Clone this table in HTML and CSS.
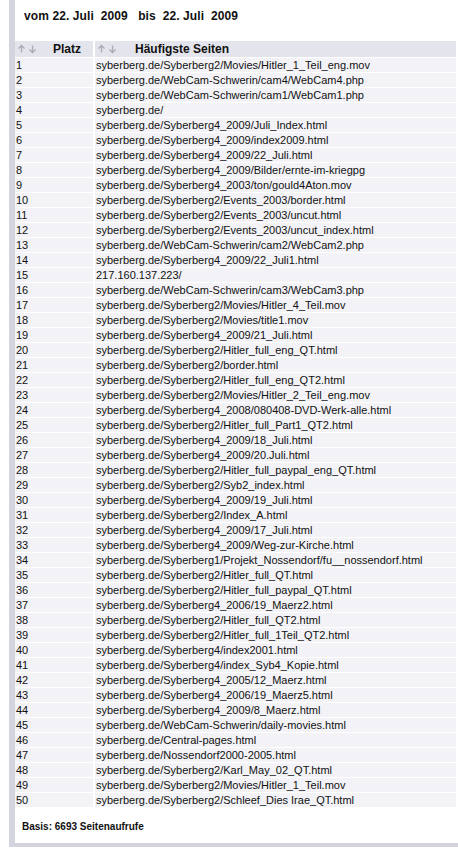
FILE: index.html
```html
<!DOCTYPE html>
<html lang="de">
<head>
<meta charset="utf-8">
<title>Häufigste Seiten</title>
<link rel="stylesheet" href="styles.css">
</head>
<body>
<div class="page">
  <h1 class="range">vom 22. Juli&nbsp; 2009 &nbsp; bis&nbsp; 22. Juli&nbsp; 2009</h1>
  <table class="stats">
    <thead>
      <tr>
        <th class="c1"><span class="sort"><svg viewBox="0 0 9 10"><path d="M4.5 1.5v7M1.5 4.5l3-3 3 3"/></svg><svg viewBox="0 0 9 10"><path d="M4.5 1.5v7M1.5 5.5l3 3 3-3"/></svg></span><span class="lbl l1">Platz</span></th>
        <th class="c2"><span class="sort"><svg viewBox="0 0 9 10"><path d="M4.5 1.5v7M1.5 4.5l3-3 3 3"/></svg><svg viewBox="0 0 9 10"><path d="M4.5 1.5v7M1.5 5.5l3 3 3-3"/></svg></span><span class="lbl l2">Häufigste Seiten</span></th>
      </tr>
    </thead>
    <tbody>
<tr><td>1</td><td>syberberg.de/Syberberg2/Movies/Hitler_1_Teil_eng.mov</td></tr>
<tr><td>2</td><td>syberberg.de/WebCam-Schwerin/cam4/WebCam4.php</td></tr>
<tr><td>3</td><td>syberberg.de/WebCam-Schwerin/cam1/WebCam1.php</td></tr>
<tr><td>4</td><td>syberberg.de/</td></tr>
<tr><td>5</td><td>syberberg.de/Syberberg4_2009/Juli_Index.html</td></tr>
<tr><td>6</td><td>syberberg.de/Syberberg4_2009/index2009.html</td></tr>
<tr><td>7</td><td>syberberg.de/Syberberg4_2009/22_Juli.html</td></tr>
<tr><td>8</td><td>syberberg.de/Syberberg4_2009/Bilder/ernte-im-kriegpg</td></tr>
<tr><td>9</td><td>syberberg.de/Syberberg4_2003/ton/gould4Aton.mov</td></tr>
<tr><td>10</td><td>syberberg.de/Syberberg2/Events_2003/border.html</td></tr>
<tr><td>11</td><td>syberberg.de/Syberberg2/Events_2003/uncut.html</td></tr>
<tr><td>12</td><td>syberberg.de/Syberberg2/Events_2003/uncut_index.html</td></tr>
<tr><td>13</td><td>syberberg.de/WebCam-Schwerin/cam2/WebCam2.php</td></tr>
<tr><td>14</td><td>syberberg.de/Syberberg4_2009/22_Juli1.html</td></tr>
<tr><td>15</td><td>217.160.137.223/</td></tr>
<tr><td>16</td><td>syberberg.de/WebCam-Schwerin/cam3/WebCam3.php</td></tr>
<tr><td>17</td><td>syberberg.de/Syberberg2/Movies/Hitler_4_Teil.mov</td></tr>
<tr><td>18</td><td>syberberg.de/Syberberg2/Movies/title1.mov</td></tr>
<tr><td>19</td><td>syberberg.de/Syberberg4_2009/21_Juli.html</td></tr>
<tr><td>20</td><td>syberberg.de/Syberberg2/Hitler_full_eng_QT.html</td></tr>
<tr><td>21</td><td>syberberg.de/Syberberg2/border.html</td></tr>
<tr><td>22</td><td>syberberg.de/Syberberg2/Hitler_full_eng_QT2.html</td></tr>
<tr><td>23</td><td>syberberg.de/Syberberg2/Movies/Hitler_2_Teil_eng.mov</td></tr>
<tr><td>24</td><td>syberberg.de/Syberberg4_2008/080408-DVD-Werk-alle.html</td></tr>
<tr><td>25</td><td>syberberg.de/Syberberg2/Hitler_full_Part1_QT2.html</td></tr>
<tr><td>26</td><td>syberberg.de/Syberberg4_2009/18_Juli.html</td></tr>
<tr><td>27</td><td>syberberg.de/Syberberg4_2009/20.Juli.html</td></tr>
<tr><td>28</td><td>syberberg.de/Syberberg2/Hitler_full_paypal_eng_QT.html</td></tr>
<tr><td>29</td><td>syberberg.de/Syberberg2/Syb2_index.html</td></tr>
<tr><td>30</td><td>syberberg.de/Syberberg4_2009/19_Juli.html</td></tr>
<tr><td>31</td><td>syberberg.de/Syberberg2/Index_A.html</td></tr>
<tr><td>32</td><td>syberberg.de/Syberberg4_2009/17_Juli.html</td></tr>
<tr><td>33</td><td>syberberg.de/Syberberg4_2009/Weg-zur-Kirche.html</td></tr>
<tr><td>34</td><td>syberberg.de/Syberberg1/Projekt_Nossendorf/fu__nossendorf.html</td></tr>
<tr><td>35</td><td>syberberg.de/Syberberg2/Hitler_full_QT.html</td></tr>
<tr><td>36</td><td>syberberg.de/Syberberg2/Hitler_full_paypal_QT.html</td></tr>
<tr><td>37</td><td>syberberg.de/Syberberg4_2006/19_Maerz2.html</td></tr>
<tr><td>38</td><td>syberberg.de/Syberberg2/Hitler_full_QT2.html</td></tr>
<tr><td>39</td><td>syberberg.de/Syberberg2/Hitler_full_1Teil_QT2.html</td></tr>
<tr><td>40</td><td>syberberg.de/Syberberg4/index2001.html</td></tr>
<tr><td>41</td><td>syberberg.de/Syberberg4/index_Syb4_Kopie.html</td></tr>
<tr><td>42</td><td>syberberg.de/Syberberg4_2005/12_Maerz.html</td></tr>
<tr><td>43</td><td>syberberg.de/Syberberg4_2006/19_Maerz5.html</td></tr>
<tr><td>44</td><td>syberberg.de/Syberberg4_2009/8_Maerz.html</td></tr>
<tr><td>45</td><td>syberberg.de/WebCam-Schwerin/daily-movies.html</td></tr>
<tr><td>46</td><td>syberberg.de/Central-pages.html</td></tr>
<tr><td>47</td><td>syberberg.de/Nossendorf2000-2005.html</td></tr>
<tr><td>48</td><td>syberberg.de/Syberberg2/Karl_May_02_QT.html</td></tr>
<tr><td>49</td><td>syberberg.de/Syberberg2/Movies/Hitler_1_Teil.mov</td></tr>
<tr><td>50</td><td>syberberg.de/Syberberg2/Schleef_Dies Irae_QT.html</td></tr>
    </tbody>
  </table>
  <p class="basis">Basis: 6693 Seitenaufrufe</p>
</div>
</body>
</html>
```
FILE: styles.css
```css
html, body {
  margin: 0;
  padding: 0;
  background: #ffffff;
}
body {
  font-family: "Liberation Sans", Arial, Helvetica, sans-serif;
  color: #111111;
  width: 458px;
  overflow: hidden;
}
.page {
  margin-left: 9px;
  border-left: 6px solid #d2d4de;
  border-bottom: 4px solid #d3d3df;
  margin-bottom: 3px;
}
.range {
  margin: 0;
  padding: 9px 0 0 9px;
  height: 32px;
  box-sizing: border-box;
  font-size: 12px;
  font-weight: bold;
  line-height: 14px;
  letter-spacing: 0.1px;
}
.stats {
  border-collapse: separate;
  border-spacing: 2px 1px;
  margin-left: -2px;
  margin-top: 8px;
  font-size: 11px;
  width: 445px;
}
.stats th {
  background: #e4e5ec;
  height: 16px;
  padding: 0 0 0 2px;
  text-align: left;
  font-weight: bold;
  font-size: 12px;
  white-space: nowrap;
}
.stats th.c1 {
  width: 76px;
}
.sort {
  display: inline-flex;
  gap: 2px;
  vertical-align: -1px;
}
.sort svg {
  width: 9px;
  height: 10px;
  fill: none;
  stroke: #a9abb6;
  stroke-width: 1.3;
}
.lbl {
  display: inline-block;
}
.l1 { margin-left: 16px; }
.l2 { margin-left: 18px; }
.stats td {
  background: #f3f3f7;
  height: 14px;
  line-height: 14px;
  padding: 0 0 0 1px;
  white-space: nowrap;
}
.basis {
  margin: 0;
  padding: 12px 0 0 7px;
  height: 35px;
  box-sizing: border-box;
  font-size: 10px;
  font-weight: bold;
  line-height: 14px;
}
```
